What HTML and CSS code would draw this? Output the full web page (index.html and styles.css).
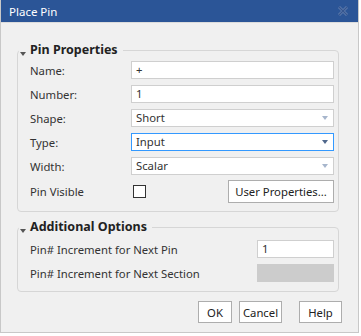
FILE: index.html
```html
<!DOCTYPE html>
<html lang="en">
<head>
  <meta charset="UTF-8">
  <title>Place Pin</title>
  <link rel="stylesheet" href="styles.css">
</head>
<body>
  <div class="dialog">
    <div class="titlebar">
      <span>Place Pin</span>
      <svg class="close" width="10" height="10" viewBox="0 0 10 10">
        <path d="M1 1 L9 9 M9 1 L1 9" stroke="#6580b0" stroke-width="2.8"/>
        <path d="M1 1 L9 9 M9 1 L1 9" stroke="#34558f" stroke-width="1.2"/>
      </svg>
    </div>

    <div class="content">
      <fieldset class="group">
        <legend><i class="arrow"></i>Pin Properties</legend>
        <div class="rows">
          <label>Name:</label>
          <div class="field">+</div>
          <label>Number:</label>
          <div class="field">1</div>
          <label>Shape:</label>
          <div class="field combo">Short<i class="drop"></i></div>
          <label>Type:</label>
          <div class="field combo focus">Input<i class="drop"></i></div>
          <label>Width:</label>
          <div class="field combo">Scalar<i class="drop"></i></div>
        </div>
        <div class="visible-row">
          <label>Pin Visible</label>
          <span class="check"></span>
          <button class="btn user-props">User Properties...</button>
        </div>
      </fieldset>

      <fieldset class="group extra">
        <legend><i class="arrow"></i>Additional Options</legend>
        <div class="opt-row">
          <label>Pin# Increment for Next Pin</label>
          <div class="field small">1</div>
        </div>
        <div class="opt-row">
          <label>Pin# Increment for Next Section</label>
          <div class="field small disabled"></div>
        </div>
      </fieldset>

      <div class="buttons">
        <button class="btn ok">OK</button>
        <button class="btn cancel">Cancel</button>
        <button class="btn help">Help</button>
      </div>
    </div>
  </div>
</body>
</html>
```

FILE: styles.css
```css
body {
  margin: 0;
  background: #fff;
  font-family: "Noto Sans", "Open Sans", sans-serif;
  font-size: 11.3px;
  color: #333;
}
.dialog {
  width: 357px;
  height: 332px;
  background: #f0f0f0;
  border: 1px solid #c8c8c8;
  border-top: none;
}
.titlebar {
  height: 22px;
  background: #2b5597;
  color: #fff;
  display: flex;
  align-items: center;
  justify-content: space-between;
  padding: 0 8px;
  border-bottom: 1px solid #dcdcdc;
}
.titlebar span {
  font-size: 11.5px;
}
.close {
  margin-right: 2px;
}
.content {
  padding: 0 19px 0 16px;
}
.group {
  margin: 19px 0 0 0;
  padding: 0 4px 8px 12px;
  border: 1px solid #d6d6d6;
  border-radius: 4px;
  min-width: 0;
}
.group legend {
  font-weight: bold;
  font-size: 12.5px;
  color: #222;
  padding: 0 5px 0 0;
  margin-left: -11px;
  display: flex;
  align-items: flex-end;
  line-height: 16px;
}
.arrow {
  display: inline-block;
  width: 0;
  height: 0;
  border-left: 3px solid transparent;
  border-right: 3px solid transparent;
  border-top: 4px solid #555;
  margin: 0 4px 2px 1px;
}
.rows {
  display: grid;
  grid-template-columns: 101px 1fr;
  row-gap: 6px;
  align-items: center;
  margin-top: 3px;
}
.field {
  height: 18px;
  box-sizing: border-box;
  background: #fff;
  border: 1px solid #cfcfcf;
  padding: 0 4px;
  line-height: 16px;
  display: flex;
  align-items: center;
  justify-content: space-between;
}
.field.focus {
  border-color: #3399ff;
}
.drop {
  width: 0;
  height: 0;
  border-left: 3px solid transparent;
  border-right: 3px solid transparent;
  border-top: 4px solid #a7b6cc;
  margin-right: 1px;
}
.focus .drop {
  border-top-color: #50688c;
}
.visible-row {
  display: flex;
  align-items: center;
  margin-top: 5px;
  height: 23px;
}
.visible-row label {
  width: 103px;
}
.check {
  width: 13px;
  height: 13px;
  box-sizing: border-box;
  border: 1px solid #333;
  background: #fff;
}
.btn {
  font-family: inherit;
  font-size: 11.3px;
  color: #222;
  background: #fff;
  border: 1px solid #adadad;
  height: 22px;
  padding: 0;
  margin: 0;
  white-space: nowrap;
}
.user-props {
  margin-left: auto;
  width: 106px;
  height: 23px;
}
.extra {
  margin-top: 7px;
  padding-bottom: 9px;
}
.opt-row {
  display: flex;
  align-items: center;
  justify-content: space-between;
  margin-top: 6px;
}
.opt-row:first-of-type {
  margin-top: 5px;
}
.small {
  width: 77px;
  height: 18px;
}
.disabled {
  background: #cccccc;
  border-color: #cccccc;
}
.buttons {
  display: flex;
  justify-content: flex-end;
  margin-top: 9px;
  margin-right: -3px;
}
.ok {
  width: 34px;
}
.cancel {
  width: 43px;
  margin-left: 7px;
}
.help {
  width: 43px;
  margin-left: 17px;
}
```
